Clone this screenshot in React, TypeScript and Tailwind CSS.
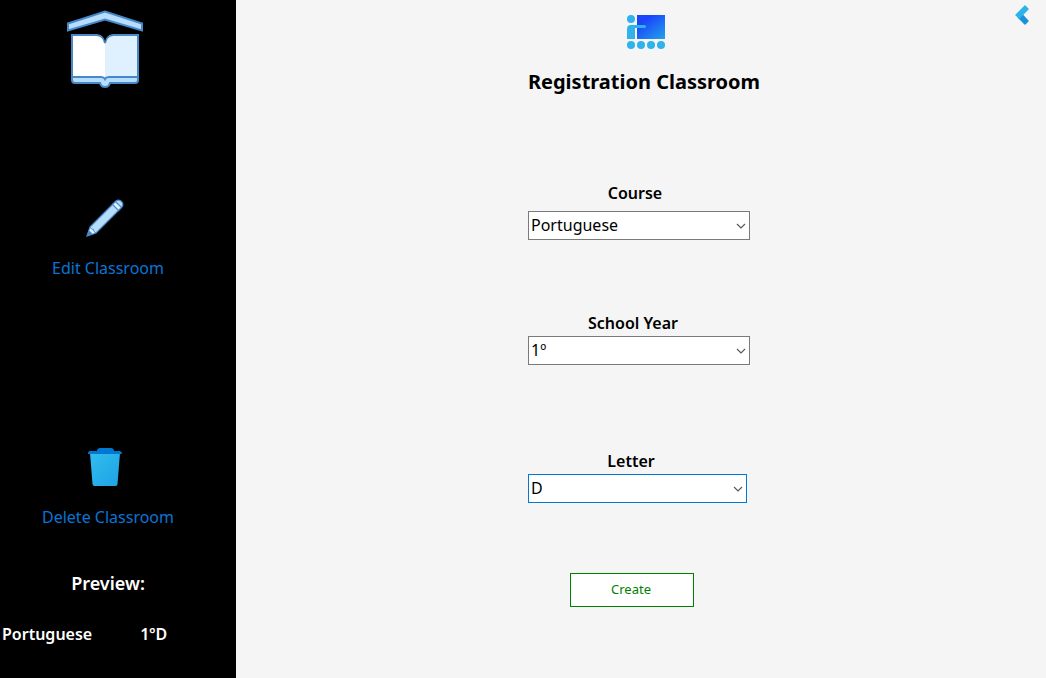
import { useState } from "react";
import type { ReactNode } from "react";

function LogoIcon() {
  return (
    <svg viewBox="0 0 78 78" className="h-[78px] w-[78px]" aria-hidden="true">
      <path d="M2 13.500 39 1.500l37 12v7L39 9.500 2 20.500Z" fill="#b6dcfe" stroke="#4788c7" strokeWidth="2" />
      <path d="M6 64h66v6q0 3-3 3H44q-1 4-5 4t-5-4H9q-3 0-3-3Z" fill="#b6dcfe" stroke="#4788c7" strokeWidth="2" />
      <path d="M6 25h26q7 0 7 8v36q-1-2-4-2H6Z" fill="#fff" />
      <path d="M72 25H46q-7 0-7 8v36q1-2 4-2h29Z" fill="#dff0fe" />
      <path d="M6 70V25h25q7 1 8 8 1-7 8-8h25v45M6 67h29q3 0 4 2 1-2 4-2h29" fill="none" stroke="#4788c7" strokeWidth="2" />
      <path d="M35 25h8q-4 3-4 8 0-5-4-8Z" fill="#000" />
    </svg>
  );
}

function PencilIcon() {
  return (
    <svg viewBox="0 0 40 40" className="h-10 w-10" aria-hidden="true">
      <path d="m5 29 24-24q4-5 7.500-1.500T35 11L11 35l-9 3Z" fill="#b6dcfe" stroke="#4788c7" strokeWidth="1.200" />
      <path d="m5.500 29.500 5 5-5 2-2-2Z" fill="#dff0fe" />
      <path d="m27.500 6.500 3-3 6 6-3 3Z" fill="#dff0fe" stroke="#4788c7" strokeWidth="1.200" />
      <path d="m2 38 1.800-6 4.200 4.200Z" fill="#4788c7" />
      <path d="m5 29 1.500 2 2 .5.5 2 2 1.500" fill="none" stroke="#4788c7" strokeWidth="1" />
    </svg>
  );
}

function TrashIcon() {
  return (
    <svg viewBox="0 0 40 40" className="h-10 w-10" aria-hidden="true">
      <defs>
        <linearGradient id="bin" x1="0" y1="0" x2="1" y2="1">
          <stop offset="0" stopColor="#32bdef" />
          <stop offset="1" stopColor="#1ea2e4" />
        </linearGradient>
      </defs>
      <path d="M5 6h30l-2.500 31q0 2-2 2h-21q-2 0-2-2Z" fill="url(#bin)" />
      <path d="M12 3q1-2 3-2h11q2 0 3 2v1h6q2 .3 2 3H3q0-3 2-3h7Z" fill="#0077d2" />
    </svg>
  );
}

function ClassroomIcon() {
  return (
    <svg viewBox="0 0 40 36" className="h-9 w-10" aria-hidden="true">
      <defs>
        <linearGradient id="board" x1="0.3" y1="0.2" x2="1" y2="1">
          <stop offset="0" stopColor="#1a45fb" />
          <stop offset="1" stopColor="#23a3ea" />
        </linearGradient>
      </defs>
      <path d="M11 1h28v24H11Z" fill="url(#board)" />
      <g fill="#2fb3ea">
        <circle cx="5" cy="5" r="4" />
        <path d="M5 11h13.500a1.500 1.500 0 0 1 0 3H9v11H1V15q0-4 4-4Z" />
        <circle cx="5" cy="31" r="4" />
        <circle cx="15" cy="31" r="4" />
        <circle cx="25" cy="31" r="4" />
        <circle cx="35" cy="31" r="4" />
      </g>
    </svg>
  );
}

function BackIcon() {
  return (
    <svg viewBox="0 0 14 20" className="h-5 w-3.5" aria-hidden="true">
      <path d="M7 8.500 13.500 15.500q.5.500 0 1l-3 3q-.5.500-1 0L2.500 12.500Z" fill="#1b91dc" />
      <path d="M9.500.500q.5-.5 1 0l3 3q.5.500 0 1L4.300 14 .500 10.500q-.5-.5 0-1Z" fill="#2db2ec" />
    </svg>
  );
}

function SideAction({ icon, label }: { icon: ReactNode; label: string }) {
  return (
    <button type="button" className="flex flex-col items-center gap-[18px] text-base text-[#0a74d6]">
      <span className="pr-1.5">{icon}</span>
      <span>{label}</span>
    </button>
  );
}

type FieldProps = {
  id: string;
  label: string;
  value: string;
  options: string[];
  onChange: (value: string) => void;
  fieldClass: string;
  labelClass: string;
  selectClass: string;
};

function Field({ id, label, value, options, onChange, fieldClass, labelClass, selectClass }: FieldProps) {
  return (
    <div className={`flex flex-col ${fieldClass}`}>
      <label htmlFor={id} className={`text-center text-base ${labelClass}`}>
        {label}
      </label>
      <div className={`grid items-center ${selectClass}`}>
        <select
          id={id}
          value={value}
          onChange={(e) => onChange(e.target.value)}
          className="col-start-1 row-start-1 h-[29px] w-full appearance-none border border-inherit bg-white pr-5 pb-0.5 pl-0.5 text-base outline-none"
        >
          {options.map((o) => (
            <option key={o}>{o}</option>
          ))}
        </select>
        <svg
          viewBox="0 0 10 6"
          className="pointer-events-none col-start-1 row-start-1 mr-1 h-1.5 w-2.5 justify-self-end"
          aria-hidden="true"
        >
          <path d="m1 1 4 4 4-4" fill="none" stroke="#555" strokeWidth="1.100" />
        </svg>
      </div>
    </div>
  );
}

export default function App() {
  const [course, setCourse] = useState("Portuguese");
  const [year, setYear] = useState("1º");
  const [letter, setLetter] = useState("D");

  return (
    <div className="flex min-h-screen bg-[#f5f5f5] font-['Noto_Sans','Noto_Sans_CJK_KR',sans-serif] text-black">
      <aside className="flex w-[236px] shrink-0 flex-col items-center bg-black pt-2.5 pr-5">
        <div className="pr-1.5">
          <LogoIcon />
        </div>
        <nav className="mt-[110px] flex flex-col items-center gap-[167px]">
          <SideAction icon={<PencilIcon />} label="Edit Classroom" />
          <SideAction icon={<TrashIcon />} label="Delete Classroom" />
        </nav>
        <h2 className="mt-10 text-lg font-semibold text-white">Preview:</h2>
        <p className="mt-[25px] flex w-full gap-12 pl-0.5 text-base font-semibold text-white">
          <span>{course}</span>
          <span>
            {year}
            {letter}
          </span>
        </p>
      </aside>

      <main className="flex grow flex-col">
        <header className="grid grid-cols-[1fr_auto_1fr] items-start pt-1">
          <div className="col-start-2 pt-2.5 pl-2.5">
            <ClassroomIcon />
          </div>
          <button type="button" aria-label="Back" className="mr-[17px] justify-self-end pt-px">
            <BackIcon />
          </button>
        </header>
        <h1 className="mt-4 pl-1.5 text-center text-xl leading-8 font-bold">Registration Classroom</h1>

        <form className="mx-auto mt-[83px] flex w-[226px] flex-col pr-1" onSubmit={(e) => e.preventDefault()}>
          <Field
            id="course"
            label="Course"
            value={course}
            options={["Portuguese", "Mathematics", "History", "Science"]}
            onChange={setCourse}
            fieldClass="gap-1.5"
            labelClass="pr-2 font-semibold"
            selectClass="border-[#7a7a7a]"
          />
          <Field
            id="year"
            label="School Year"
            value={year}
            options={["1º", "2º", "3º"]}
            onChange={setYear}
            fieldClass="mt-[71px] gap-px"
            labelClass="pr-3 font-semibold"
            selectClass="border-[#7a7a7a]"
          />
          <Field
            id="letter"
            label="Letter"
            value={letter}
            options={["A", "B", "C", "D"]}
            onChange={setLetter}
            fieldClass="mt-[84px] gap-px"
            labelClass="pr-4 font-semibold"
            selectClass="mr-[3px] border-[#0078d7]"
          />
          <button
            type="submit"
            className="mt-[70px] ml-[42px] h-[34px] w-[124px] border border-[#008000] bg-white pr-0.5 text-[13px] text-[#008000]"
          >
            Create
          </button>
        </form>
      </main>
    </div>
  );
}
